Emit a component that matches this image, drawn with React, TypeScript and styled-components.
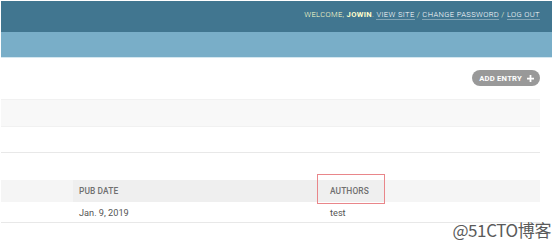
import styled, { createGlobalStyle } from 'styled-components';

const GlobalStyle = createGlobalStyle`
  html, body {
    margin: 0;
    padding: 0;
    background: #ffffff;
  }
  body {
    font-family: Roboto, "Liberation Sans", sans-serif;
    width: 558px;
    height: 245px;
    overflow: hidden;
  }
`;

const Page = styled.div`
  position: relative;
  width: 558px;
  height: 245px;
  padding: 1px 6px 0 1px;
  box-sizing: border-box;
`;

const Header = styled.div`
  display: flex;
  justify-content: flex-end;
  align-items: center;
  height: 31px;
  padding: 0 12px 4px 0;
  box-sizing: border-box;
  background: #417690;
`;

const UserTools = styled.div`
  font-size: 7.6px;
  letter-spacing: 0.35px;
  text-transform: uppercase;
  color: #ffffcc;
  font-weight: 300;

  strong {
    font-weight: 700;
  }
`;

const ToolLink = styled.a`
  color: #ffffff;
  text-decoration: none;
  border-bottom: 1px solid rgba(255, 255, 255, 0.35);
`;

const Breadcrumbs = styled.div`
  height: 25px;
  background: #79aec8;
  border-bottom: 1px solid #d4e7f0;
`;

const Content = styled.div`
  width: 539px;
  display: flex;
  flex-direction: column;
`;

const ObjectTools = styled.div`
  display: flex;
  justify-content: flex-end;
  padding-top: 12px;
  height: 16px;
`;

const AddButton = styled.a`
  display: flex;
  align-items: center;
  gap: 5px;
  height: 16px;
  padding: 0 6px 0 7px;
  border-radius: 8px;
  background: #999999;
  color: #ffffff;
  font-size: 7.7px;
  font-weight: 700;
  letter-spacing: 0.2px;
  text-transform: uppercase;
`;

const Toolbar = styled.div`
  margin-top: 13px;
  height: 28px;
  background: #f8f8f8;
  border-top: 1px solid #f1f1f1;
  border-bottom: 1px solid #f1f1f1;
  box-sizing: border-box;
`;

const Actions = styled.div`
  height: 25px;
  border-bottom: 1px solid #e8e8e8;
`;

const Table = styled.div`
  margin-top: 27px;
  display: grid;
  grid-template-columns: 72px 244px 1fr;
`;

const HeadCell = styled.div<{ $sorted?: boolean }>`
  height: 22px;
  display: flex;
  align-items: center;
  padding-left: ${(p) => (p.$sorted ? '6px' : '0')};
  background: ${(p) => (p.$sorted ? '#efefef' : '#f5f5f5')};
  font-size: 8.4px;
  font-weight: 500;
  letter-spacing: 0.1px;
  color: #707070;
  text-transform: uppercase;
`;

const Highlight = styled.div`
  position: relative;
  height: 22px;
  display: flex;
  align-items: center;
  background: #f5f5f5;
`;

const HeadLabel = styled.span`
  width: 55px;
  padding-left: 13px;
  height: 22px;
  display: flex;
  align-items: center;
  background: #efefef;
  font-size: 8.4px;
  font-weight: 500;
  letter-spacing: 0.1px;
  color: #707070;
`;

const RedBox = styled.div`
  position: absolute;
  left: 0;
  top: -6px;
  width: 66px;
  height: 28px;
  border: 1px solid #e9868a;
`;

const Cell = styled.div<{ $pad?: number }>`
  height: 21px;
  display: flex;
  align-items: center;
  padding-left: ${(p) => p.$pad ?? 0}px;
  border-bottom: 1px solid #e8e8e8;
  box-sizing: border-box;
  font-size: 9.2px;
  color: #555555;
`;

const Watermark = styled.div`
  position: absolute;
  right: 7px;
  bottom: 5px;
  font-family: "Noto Sans CJK SC", "Liberation Sans", sans-serif;
  font-size: 17px;
  line-height: 20px;
  color: #5a5a5a;
  letter-spacing: -0.4px;
  text-shadow: 0 0 1px #ffffff, 0 0 1px #ffffff;
`;

const Plus = () => (
  <svg width="7" height="7" viewBox="0 0 8 8">
    <path d="M3 0h2v3h3v2H5v3H3V5H0V3h3z" fill="#ffffff" />
  </svg>
);

export default function App() {
  return (
    <Page>
      <GlobalStyle />
      <Header>
        <UserTools>
          Welcome, <strong>jowin</strong>. <ToolLink>View site</ToolLink> /{' '}
          <ToolLink>Change password</ToolLink> / <ToolLink>Log out</ToolLink>
        </UserTools>
      </Header>
      <Breadcrumbs />
      <Content>
        <ObjectTools>
          <AddButton>
            Add entry <Plus />
          </AddButton>
        </ObjectTools>
        <Toolbar />
        <Actions />
        <Table>
          <HeadCell />
          <HeadCell $sorted>Pub date</HeadCell>
          <Highlight>
            <HeadLabel>AUTHORS</HeadLabel>
            <RedBox />
          </Highlight>
          <Cell />
          <Cell $pad={6}>Jan. 9, 2019</Cell>
          <Cell $pad={13}>test</Cell>
        </Table>
      </Content>
      <Watermark>@51CTO博客</Watermark>
    </Page>
  );
}
